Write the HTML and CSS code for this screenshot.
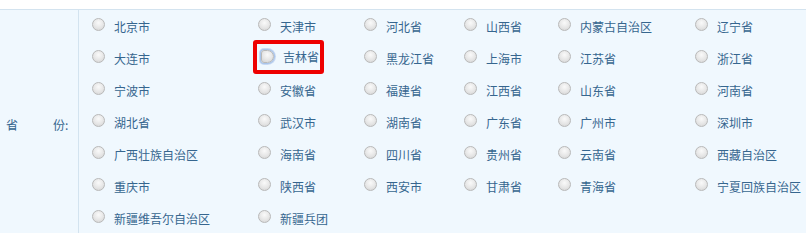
FILE: index.html
```html
<!DOCTYPE html>
<html lang="zh-CN">
<head>
<meta charset="utf-8">
<link rel="stylesheet" href="styles.css">
</head>
<body>
<div class="form-row">
  <div class="label"><span>省</span><span class="second">份:</span></div>
  <div class="options">
    <label class="opt"><i class="radio"></i>北京市</label>
    <label class="opt"><i class="radio"></i>天津市</label>
    <label class="opt"><i class="radio"></i>河北省</label>
    <label class="opt"><i class="radio"></i>山西省</label>
    <label class="opt"><i class="radio"></i>内蒙古自治区</label>
    <label class="opt"><i class="radio"></i>辽宁省</label>

    <label class="opt"><i class="radio"></i>大连市</label>
    <label class="opt focused"><span class="mark"><i class="radio"></i>吉林省</span></label>
    <label class="opt"><i class="radio"></i>黑龙江省</label>
    <label class="opt"><i class="radio"></i>上海市</label>
    <label class="opt"><i class="radio"></i>江苏省</label>
    <label class="opt"><i class="radio"></i>浙江省</label>

    <label class="opt"><i class="radio"></i>宁波市</label>
    <label class="opt"><i class="radio"></i>安徽省</label>
    <label class="opt"><i class="radio"></i>福建省</label>
    <label class="opt"><i class="radio"></i>江西省</label>
    <label class="opt"><i class="radio"></i>山东省</label>
    <label class="opt"><i class="radio"></i>河南省</label>

    <label class="opt"><i class="radio"></i>湖北省</label>
    <label class="opt"><i class="radio"></i>武汉市</label>
    <label class="opt"><i class="radio"></i>湖南省</label>
    <label class="opt"><i class="radio"></i>广东省</label>
    <label class="opt"><i class="radio"></i>广州市</label>
    <label class="opt"><i class="radio"></i>深圳市</label>

    <label class="opt"><i class="radio"></i>广西壮族自治区</label>
    <label class="opt"><i class="radio"></i>海南省</label>
    <label class="opt"><i class="radio"></i>四川省</label>
    <label class="opt"><i class="radio"></i>贵州省</label>
    <label class="opt"><i class="radio"></i>云南省</label>
    <label class="opt"><i class="radio"></i>西藏自治区</label>

    <label class="opt"><i class="radio"></i>重庆市</label>
    <label class="opt"><i class="radio"></i>陕西省</label>
    <label class="opt"><i class="radio"></i>西安市</label>
    <label class="opt"><i class="radio"></i>甘肃省</label>
    <label class="opt"><i class="radio"></i>青海省</label>
    <label class="opt"><i class="radio"></i>宁夏回族自治区</label>

    <label class="opt"><i class="radio"></i>新疆维吾尔自治区</label>
    <label class="opt"><i class="radio"></i>新疆兵团</label>
  </div>
</div>
</body>
</html>
```

FILE: styles.css
```css
html, body {
  margin: 0;
  padding: 0;
  background: #ffffff;
  overflow: hidden;
  height: 233px;
}

body {
  font-family: "Noto Sans CJK SC", "Noto Sans", sans-serif;
  font-size: 12px;
  color: #36668f;
}

.form-row {
  margin-top: 9px;
  display: flex;
  border-top: 1px solid #d3e3ef;
  background: #f0f8fe;
  width: 806px;
  height: 223px;
  overflow: hidden;
}

.label {
  width: 72px;
  padding-left: 6px;
  padding-top: 6px;
  border-right: 1px solid #d3e3ef;
  display: flex;
  align-items: center;
  line-height: 14px;
}

.label .second {
  margin-left: 35px;
}

.options {
  flex: 1;
  display: grid;
  grid-template-columns: 166px 106px 100px 94px 137px 1fr;
  grid-auto-rows: 32px;
  padding-top: 1px;
}

.opt {
  display: flex;
  align-items: center;
  padding-left: 13px;
  white-space: nowrap;
  line-height: 14px;
}

.radio {
  display: inline-block;
  width: 11px;
  height: 11px;
  border: 1px solid #b9b9b9;
  border-radius: 50%;
  background: radial-gradient(circle at 50% 35%, #fafafa 0%, #e6e6e6 55%, #d2d2d2 100%);
  margin-right: 9px;
  transform: translateY(-3px);
  flex: none;
}

.focused .mark {
  display: inline-flex;
  align-items: center;
  height: 26px;
  margin-left: -5px;
  padding: 0 1px 0 4px;
  border: 4px solid #ee0000;
  border-radius: 3px;
  transform: translateY(-2px);
}

.focused .radio {
  box-shadow: 0 0 0 1px #a9c4ea, 0 0 0 2px #c8d9f2;
  border-radius: 3px 50% 50% 3px;
  transform: translateY(-1px);
}
```
